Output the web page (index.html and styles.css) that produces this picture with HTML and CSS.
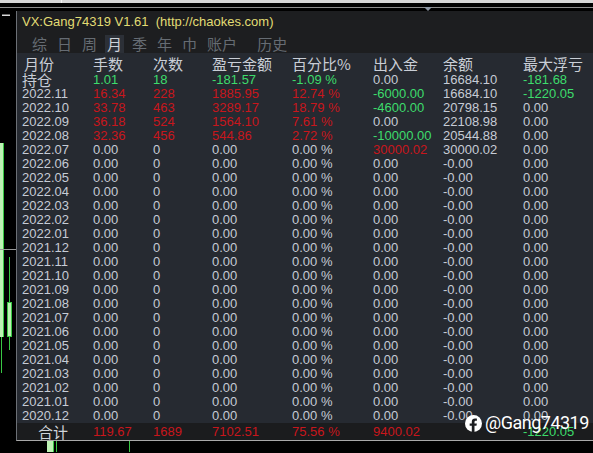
FILE: index.html
```html
<!DOCTYPE html>
<html>
<head>
<meta charset="utf-8">
<link rel="stylesheet" href="styles.css">
</head>
<body>
<div class="screen">
  <div class="topstrip"><span class="tick"></span></div>
  <div class="topgap"></div>
  <div class="toprule"><span class="arrow"></span></div>
  <div class="main">
    <svg class="chart" width="16" height="445" viewBox="0 0 16 445">
      <rect x="2" y="6.5" width="8" height="1.5" fill="#d8d8d8"/>
      <rect x="0" y="135" width="3" height="194" fill="#bdf2b4"/>
      <rect x="3" y="135" width="1" height="194" fill="#39c844"/>
      <rect x="1" y="329" width="1" height="36" fill="#39c844"/>
      <rect x="0" y="241" width="16" height="1" fill="#9a9a9a"/>
      <rect x="9" y="249" width="1" height="45" fill="#39c844"/>
      <rect x="7.5" y="294.5" width="4" height="34" fill="#bdf2b4" stroke="#39c844" stroke-width="1"/>
      <rect x="9" y="329" width="1" height="13" fill="#39c844"/>
    </svg>
    <div class="col">
      <div class="panel">
        <div class="titlebar">VX:Gang74319 V1.61  (http://chaokes.com)</div>
        <div class="tabs">
          <span class="tab">综</span>
          <span class="tab">日</span>
          <span class="tab">周</span>
          <span class="tab active">月</span>
          <span class="tab">季</span>
          <span class="tab">年</span>
          <span class="tab">巾</span>
          <span class="tab wide">账户</span>
          <span class="tab">历史</span>
        </div>
        <div class="table">
          <div class="row head"><span>月份</span><span>手数</span><span>次数</span><span>盈亏金额</span><span>百分比%</span><span>出入金</span><span>余额</span><span>最大浮亏</span></div>
          <div class="row"><span class="cjk">持仓</span><span class="g">1.01</span><span class="g">18</span><span class="g">-181.57</span><span class="g">-1.09 %</span><span>0.00</span><span>16684.10</span><span class="g">-181.68</span></div>
          <div class="row"><span>2022.11</span><span class="r">16.34</span><span class="r">228</span><span class="r">1885.95</span><span class="r">12.74 %</span><span class="g">-6000.00</span><span>16684.10</span><span class="g">-1220.05</span></div>
          <div class="row"><span>2022.10</span><span class="r">33.78</span><span class="r">463</span><span class="r">3289.17</span><span class="r">18.79 %</span><span class="g">-4600.00</span><span>20798.15</span><span>0.00</span></div>
          <div class="row"><span>2022.09</span><span class="r">36.18</span><span class="r">524</span><span class="r">1564.10</span><span class="r">7.61 %</span><span>0.00</span><span>22108.98</span><span>0.00</span></div>
          <div class="row"><span>2022.08</span><span class="r">32.36</span><span class="r">456</span><span class="r">544.86</span><span class="r">2.72 %</span><span class="g">-10000.00</span><span>20544.88</span><span>0.00</span></div>
          <div class="row"><span>2022.07</span><span>0.00</span><span>0</span><span>0.00</span><span>0.00 %</span><span class="r">30000.02</span><span>30000.02</span><span>0.00</span></div>
          <div class="row"><span>2022.06</span><span>0.00</span><span>0</span><span>0.00</span><span>0.00 %</span><span>0.00</span><span>-0.00</span><span>0.00</span></div>
          <div class="row"><span>2022.05</span><span>0.00</span><span>0</span><span>0.00</span><span>0.00 %</span><span>0.00</span><span>-0.00</span><span>0.00</span></div>
          <div class="row"><span>2022.04</span><span>0.00</span><span>0</span><span>0.00</span><span>0.00 %</span><span>0.00</span><span>-0.00</span><span>0.00</span></div>
          <div class="row"><span>2022.03</span><span>0.00</span><span>0</span><span>0.00</span><span>0.00 %</span><span>0.00</span><span>-0.00</span><span>0.00</span></div>
          <div class="row"><span>2022.02</span><span>0.00</span><span>0</span><span>0.00</span><span>0.00 %</span><span>0.00</span><span>-0.00</span><span>0.00</span></div>
          <div class="row"><span>2022.01</span><span>0.00</span><span>0</span><span>0.00</span><span>0.00 %</span><span>0.00</span><span>-0.00</span><span>0.00</span></div>
          <div class="row"><span>2021.12</span><span>0.00</span><span>0</span><span>0.00</span><span>0.00 %</span><span>0.00</span><span>-0.00</span><span>0.00</span></div>
          <div class="row"><span>2021.11</span><span>0.00</span><span>0</span><span>0.00</span><span>0.00 %</span><span>0.00</span><span>-0.00</span><span>0.00</span></div>
          <div class="row"><span>2021.10</span><span>0.00</span><span>0</span><span>0.00</span><span>0.00 %</span><span>0.00</span><span>-0.00</span><span>0.00</span></div>
          <div class="row"><span>2021.09</span><span>0.00</span><span>0</span><span>0.00</span><span>0.00 %</span><span>0.00</span><span>-0.00</span><span>0.00</span></div>
          <div class="row"><span>2021.08</span><span>0.00</span><span>0</span><span>0.00</span><span>0.00 %</span><span>0.00</span><span>-0.00</span><span>0.00</span></div>
          <div class="row"><span>2021.07</span><span>0.00</span><span>0</span><span>0.00</span><span>0.00 %</span><span>0.00</span><span>-0.00</span><span>0.00</span></div>
          <div class="row"><span>2021.06</span><span>0.00</span><span>0</span><span>0.00</span><span>0.00 %</span><span>0.00</span><span>-0.00</span><span>0.00</span></div>
          <div class="row"><span>2021.05</span><span>0.00</span><span>0</span><span>0.00</span><span>0.00 %</span><span>0.00</span><span>-0.00</span><span>0.00</span></div>
          <div class="row"><span>2021.04</span><span>0.00</span><span>0</span><span>0.00</span><span>0.00 %</span><span>0.00</span><span>-0.00</span><span>0.00</span></div>
          <div class="row"><span>2021.03</span><span>0.00</span><span>0</span><span>0.00</span><span>0.00 %</span><span>0.00</span><span>-0.00</span><span>0.00</span></div>
          <div class="row"><span>2021.02</span><span>0.00</span><span>0</span><span>0.00</span><span>0.00 %</span><span>0.00</span><span>-0.00</span><span>0.00</span></div>
          <div class="row"><span>2021.01</span><span>0.00</span><span>0</span><span>0.00</span><span>0.00 %</span><span>0.00</span><span>-0.00</span><span>0.00</span></div>
          <div class="row"><span>2020.12</span><span>0.00</span><span>0</span><span>0.00</span><span>0.00 %</span><span>0.00</span><span>-0.00</span><span>0.00</span></div>
        </div>
        <div class="row total"><span class="cjk sum">合计</span><span class="r">119.67</span><span class="r">1689</span><span class="r">7102.51</span><span class="r">75.56 %</span><span class="r">9400.02</span><span></span><span class="g">-1220.05</span></div>
        <div class="wm">
          <svg class="fb" width="17" height="17" viewBox="0 0 24 24">
            <circle cx="12" cy="12" r="12" fill="#ffffff"/>
            <path d="M13.4 24V15.2h2.8l.5-3.3h-3.3V9.8c0-.9.4-1.8 1.9-1.8h1.5V5.2s-1.4-.2-2.7-.2c-2.7 0-4.5 1.6-4.5 4.6v2.4H6.6v3.3h3v8.7z" fill="#1c1d20"/>
          </svg>
          <span class="wmtext">@Gang74319</span>
        </div>
      </div>
      <svg class="below" width="577" height="11" viewBox="0 0 577 11">
        <rect x="31" y="0" width="6" height="11" fill="#bdf2b4"/>
        <rect x="37" y="0" width="1" height="11" fill="#39c844"/>
        <rect x="40" y="0" width="1" height="11" fill="#39c844"/>
        <rect x="113" y="0" width="1" height="11" fill="#39c844"/>
      </svg>
    </div>
  </div>
</div>
</body>
</html>
```
FILE: styles.css
```css
html, body {
  margin: 0;
  padding: 0;
  background: #000;
}
.screen {
  width: 593px;
  height: 453px;
  overflow: hidden;
  background: #000;
  display: flex;
  flex-direction: column;
  font-family: "Liberation Sans", Arial, "Noto Sans CJK SC", sans-serif;
}
.topstrip {
  height: 3px;
  background: #d6d6d6;
  position: relative;
  flex: none;
}
.tick {
  position: absolute;
  left: 61px;
  top: 0;
  width: 1px;
  height: 3px;
  background: #f4f4f4;
}
.topgap {
  height: 4px;
  background: #000;
  flex: none;
}
.toprule {
  height: 1px;
  background: #8c8c8c;
  position: relative;
  flex: none;
}
.arrow {
  position: absolute;
  left: 424px;
  top: 0;
  width: 0;
  height: 0;
  border-left: 4px solid transparent;
  border-right: 4px solid transparent;
  border-top: 4px solid #8c96a3;
}
.main {
  display: flex;
  flex: 1;
}
.chart {
  flex: none;
  display: block;
}
.col {
  flex: 1;
  display: flex;
  flex-direction: column;
  padding-top: 3px;
}
.panel {
  position: relative;
  background: #262a31;
  border-left: 1px solid #6c7076;
  border-bottom: 1px solid #a8a8a8;
}
.titlebar {
  height: 21px;
  line-height: 21px;
  background: #1d1e20;
  color: #e2dc74;
  font-size: 13px;
  padding-left: 5px;
  white-space: pre;
}
.tabs {
  height: 21px;
  background: #1d1e20;
  display: flex;
  align-items: flex-end;
  gap: 6px;
  padding-left: 13px;
  font-family: "Noto Sans CJK SC", sans-serif;
  font-size: 15px;
  color: #666c73;
}
.tab {
  height: 18px;
  line-height: 18px;
  padding: 0 2px;
}
.tab.active {
  background: #2c3037;
  color: #cdd2d8;
}
.tab.wide {
  margin-right: 10px;
}
.table {
  padding: 2px 0 0 5px;
}
.row {
  display: grid;
  grid-template-columns: 71px 60px 59px 80px 81px 70px 80px 1fr;
  height: 14px;
  line-height: 14px;
  font-size: 13px;
  color: #c6ccd6;
  white-space: nowrap;
}
.row.head {
  height: 18px;
  line-height: 17px;
  font-family: "Noto Sans CJK SC", sans-serif;
  font-size: 15px;
  color: #c9ced6;
}
.row.head span:first-child {
  padding-left: 2px;
}
.cjk {
  font-family: "Noto Sans CJK SC", sans-serif;
  font-size: 15px;
}
.g { color: #3ddc6c; }
.r { color: #c8161c; }
.row.total {
  height: 17px;
  line-height: 18px;
  background: #1b1c1e;
  padding-left: 5px;
}
.sum {
  padding-left: 16px;
  color: #d0d4da;
}
.wm {
  position: absolute;
  left: 448px;
  top: 401px;
  display: flex;
  align-items: center;
  gap: 3px;
}
.fb {
  display: block;
}
.wmtext {
  font-family: Roboto, "Liberation Sans", sans-serif;
  font-size: 18px;
  letter-spacing: -0.5px;
  color: #ffffff;
  line-height: 22px;
}
.below {
  display: block;
  flex: none;
}
```
